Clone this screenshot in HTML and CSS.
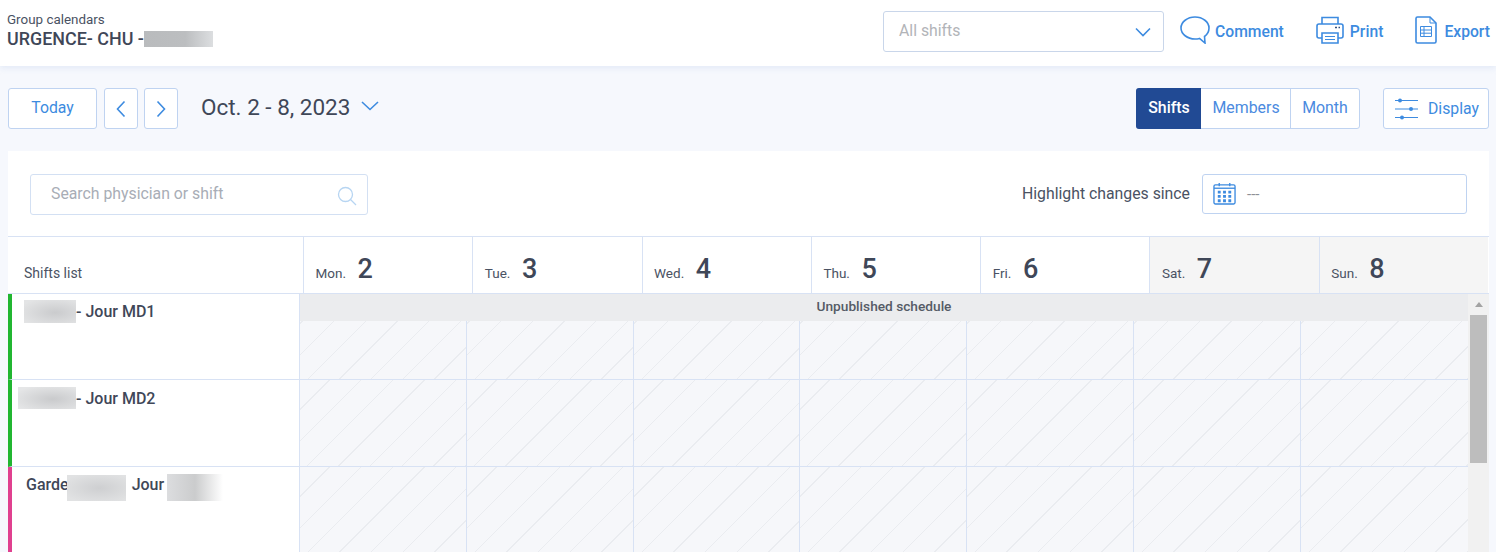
FILE: index.html
```html
<!DOCTYPE html>
<html lang="en">
<head>
<meta charset="utf-8">
<title>Group calendars</title>
<link rel="stylesheet" href="styles.css">
</head>
<body>
<header class="topbar">
  <div class="title">
    <div class="title-small">Group calendars</div>
    <div class="title-main">URGENCE- CHU -<span class="redact redact-title"></span></div>
  </div>
  <div class="actions">
    <div class="select"><span>All shifts</span>
      <svg class="chev-select" viewBox="0 0 16 10" width="16" height="10"><path d="M1 1.500l7 7 7-7" fill="none" stroke="#3d8be0" stroke-width="1.600"/></svg>
    </div>
    <a class="action action-comment">
      <svg viewBox="0 0 30 28" width="30" height="28"><path d="M15 1C7.300 1 1 6 1 12s6.300 11 14 11c1.600 0 3-.2 4.500-.6L25 27l-.5-6.500C27.300 18.500 29 15.500 29 12 29 6 22.700 1 15 1z" fill="none" stroke="#3d8be0" stroke-width="1.600"/></svg>
      <span>Comment</span></a>
    <a class="action action-print">
      <svg viewBox="0 0 28 28" width="28" height="28" fill="none" stroke="#3d8be0" stroke-width="1.600"><path d="M6 8V1.500h16V8"/><path d="M6 22H3a2 2 0 0 1-2-2V10a2 2 0 0 1 2-2h22a2 2 0 0 1 2 2v10a2 2 0 0 1-2 2h-3"/><path d="M6 17h16v10H6z"/><path d="M9 20.500h10M9 23.500h10" stroke-width="1"/><path d="M19 11.500h2M22.500 11.500h1.500" stroke="#30507f" stroke-width="1.600"/></svg>
      <span>Print</span></a>
    <a class="action action-export">
      <svg viewBox="0 0 22 28" width="22" height="28" fill="none" stroke="#3d8be0" stroke-width="1.600"><path d="M1 2.500A1.500 1.500 0 0 1 2.500 1H15l6 6v18.500a1.500 1.500 0 0 1-1.500 1.500h-17A1.500 1.500 0 0 1 1 25.500z"/><path d="M15 1v6h6" stroke-width="1"/><path d="M5.500 10.500h11v10h-11zM5.500 14h11M5.500 17.200h11M9 10.500v10" stroke-width="1"/></svg>
      <span>Export</span></a>
  </div>
</header>

<section class="toolbar">
  <div class="nav">
    <button class="btn btn-today">Today</button>
    <button class="btn btn-arrow btn-prev"><svg viewBox="0 0 10 18" width="10" height="18"><path d="M8.500 1.500L1.500 9l7 7.500" fill="none" stroke="#3d8be0" stroke-width="1.600"/></svg></button>
    <button class="btn btn-arrow btn-next"><svg viewBox="0 0 10 18" width="10" height="18"><path d="M1.500 1.500L8.500 9l-7 7.500" fill="none" stroke="#3d8be0" stroke-width="1.600"/></svg></button>
    <div class="range">Oct. 2 - 8, 2023</div>
    <svg class="chev-range" viewBox="0 0 18 10" width="18" height="10"><path d="M1 1l8 7.500L17 1" fill="none" stroke="#3d8be0" stroke-width="1.600"/></svg>
  </div>
  <div class="views">
    <div class="segment">
      <div class="seg seg-on">Shifts</div>
      <div class="seg seg-members">Members</div>
      <div class="seg seg-month">Month</div>
    </div>
    <button class="btn btn-display">
      <svg viewBox="0 0 24 22" width="24" height="22" fill="none" stroke="#3d8be0"><path d="M1 2.500h23M1 11h23M1 19.500h23" stroke-width="1.100"/><circle cx="6" cy="2.500" r="2" fill="#3d8be0" stroke="none"/><circle cx="17" cy="11" r="2" fill="#3d8be0" stroke="none"/><circle cx="8" cy="19.500" r="2" fill="#3d8be0" stroke="none"/></svg>
      <span>Display</span></button>
  </div>
</section>

<main class="card">
  <div class="filters">
    <div class="search"><span>Search physician or shift</span>
      <svg viewBox="0 0 20 20" width="20" height="20" fill="none" stroke="#b7d5f2" stroke-width="1.300"><circle cx="8.500" cy="8.500" r="7"/><path d="M13.500 13.500l5.500 5.500"/></svg>
    </div>
    <div class="highlight">
      <span class="highlight-label">Highlight changes since</span>
      <div class="date">
        <svg viewBox="0 0 24 24" width="23" height="23"><rect x="1" y="3" width="22" height="20" rx="1.500" fill="none" stroke="#3d8be0" stroke-width="1.400"/><path d="M1 6.500h22" stroke="#3d8be0" stroke-width="1.400"/><path d="M6.500 1v3.500M17.500 1v3.500" stroke="#3d8be0" stroke-width="1.400"/><path d="M5 9h3v3H5zM10.500 9h3v3h-3zM16 9h3v3h-3zM5 13.500h3v3H5zM10.500 13.500h3v3h-3zM16 13.500h3v3h-3zM5 18h3v3H5zM10.500 18h3v3h-3zM16 18h3v3h-3z" fill="#3d8be0"/></svg>
        <span>---</span>
      </div>
    </div>
  </div>

  <div class="days">
    <div class="list-head">Shifts list</div>
    <div class="day"><span class="d-name">Mon.</span><span class="d-num">2</span></div>
    <div class="day"><span class="d-name">Tue.</span><span class="d-num">3</span></div>
    <div class="day"><span class="d-name">Wed.</span><span class="d-num">4</span></div>
    <div class="day"><span class="d-name">Thu.</span><span class="d-num">5</span></div>
    <div class="day"><span class="d-name">Fri.</span><span class="d-num">6</span></div>
    <div class="day day-off"><span class="d-name">Sat.</span><span class="d-num">7</span></div>
    <div class="day day-off"><span class="d-name">Sun.</span><span class="d-num">8</span></div>
  </div>

  <div class="body">
    <div class="rows">
      <div class="labels">
        <div class="label label-green label-one"><span class="redact redact-a"></span><span>- Jour MD1</span></div>
        <div class="label label-green label-two"><span class="redact redact-b"></span><span>- Jour MD2</span></div>
        <div class="label label-pink label-three"><span>Garde</span><span class="redact redact-c"></span><span>Jour</span><span class="redact redact-d"></span></div>
      </div>
      <div class="grid">
        <div class="banner">Unpublished schedule</div>
        <div class="row row-first"><i></i><i></i><i></i><i></i><i></i><i></i><i></i></div>
        <div class="row row-second"><i></i><i></i><i></i><i></i><i></i><i></i><i></i></div>
        <div class="row row-third"><i></i><i></i><i></i><i></i><i></i><i></i><i></i></div>
      </div>
    </div>
    <div class="scrollbar">
      <div class="scroll-up"></div>
      <div class="scroll-thumb"></div>
    </div>
  </div>
</main>
</body>
</html>
```

FILE: styles.css
```css
* { box-sizing: border-box; }
html, body { margin: 0; height: 552px; overflow: hidden; }
body { background: #f6f8fd; font-family: Roboto, "Liberation Sans", sans-serif; color: #3f4758; }

.topbar { height: 66px; background: #fff; box-shadow: 0 2px 6px rgba(190,205,235,.35); display: flex; justify-content: space-between; padding: 0 6px 0 7px; position: relative; }
.title { padding-top: 13px; }
.title-small { font-size: 13.4px; line-height: 14px; color: #4a5263; }
.title-main { font-size: 17.9px; font-weight: 500; line-height: 20px; margin-top: 2px; display: flex; color: #3f4758; }
.redact { display: inline-block; }
.redact-title { width: 69px; height: 16px; margin-top: 2px; background: linear-gradient(90deg,#b9bbbd,#bcbec0 60%,#dcdee0); }

.actions { display: flex; align-items: flex-start; }
.select { width: 281px; height: 41px; margin-top: 11px; border: 1px solid #c9d6ea; border-radius: 3px; display: flex; align-items: center; justify-content: space-between; padding: 0 11px 0 15px; font-size: 15.8px; color: #b2b4b8; }
.select span { margin-bottom: 2px; }
.chev-select { margin-right: 1px; }
.action { display: flex; align-items: center; color: #3d8be0; font-size: 15.7px; font-weight: 500; height: 30px; margin-top: 16px; }
.action svg { margin-bottom: 3px; }
.action-comment { margin-left: 16px; gap: 5px; }
.action-print { margin-left: 32px; gap: 6px; }
.action-export { margin-left: 32px; gap: 7px; }

.toolbar { height: 85px; padding: 22px 7px 0 8px; display: flex; justify-content: space-between; align-items: flex-start; }
.nav, .views { display: flex; align-items: flex-start; }
.btn { font-family: inherit; background: #fff; border: 1px solid #bfd3f1; border-radius: 3px; color: #3d8be0; font-size: 15.8px; padding: 0; display: flex; align-items: center; justify-content: center; height: 41px; }
.btn-today { width: 89px; padding-bottom: 2px; }
.btn-arrow { width: 34px; }
.btn-prev { margin-left: 7px; }
.btn-next { margin-left: 6px; }
.range { font-size: 22.5px; line-height: 38px; margin-left: 23px; color: #3f4758; }
.chev-range { margin: 13px 0 0 11px; }

.segment { display: flex; height: 41px; border: 1px solid #bfd3f1; border-radius: 3px; background: #fff; font-size: 15.9px; color: #4b8ae0; }
.seg { display: flex; align-items: center; justify-content: center; padding-bottom: 2px; }
.seg-on { width: 65px; margin: -1px 0 -1px -1px; padding-left: 1px; background: #214a94; color: #fff; border-radius: 3px 0 0 3px; font-weight: 500; }
.seg-members { width: 90px; padding-left: 1px; border-right: 1px solid #bfd3f1; }
.seg-month { width: 68px; }
.btn-display { width: 106px; margin-left: 23px; gap: 10px; }
.btn-display svg { margin-left: 1px; }

.card { margin: 0 7px 0 8px; background: #fff; }
.filters { height: 86px; padding: 23px 22px 0; display: flex; justify-content: space-between; align-items: flex-start; border-bottom: 1px solid #d8e2f4; }
.search { width: 338px; height: 41px; border: 1px solid #d3e0f3; border-radius: 3px; display: flex; align-items: center; justify-content: space-between; padding: 0 10px 0 20px; font-size: 15.8px; color: #a8adb6; }
.search span { margin-bottom: 2px; }
.search svg { margin-top: 2px; }
.highlight { display: flex; align-items: flex-start; }
.highlight-label { font-size: 15.8px; line-height: 40px; color: #4a5263; }
.date { width: 265px; height: 40px; margin-left: 12px; border: 1px solid #bfd3f1; border-radius: 3px; display: flex; align-items: center; padding: 0 0 0 10px; gap: 11px; font-size: 15px; color: #8d9096; }
.date svg { margin-bottom: 1px; }

.days { display: grid; grid-template-columns: 295px repeat(7, 169.3px); height: 57px; border-bottom: 1px solid #d8e2f4; }
.list-head { font-size: 14px; padding: 28px 0 0 16px; line-height: 16px; color: #4a5263; }
.day { border-left: 1px solid #d8e2f4; padding: 12px 0 9px 11.5px; display: flex; align-items: flex-end; }
.day-off { background: #f5f5f5; }
.d-name { font-size: 13.5px; line-height: 16px; color: #4a5263; margin-bottom: 3px; }
.d-num { font-size: 27px; font-weight: 500; line-height: 30px; margin-left: 11.5px; color: #3f4758; }

.body { display: flex; height: 258px; overflow: hidden; }
.rows { display: flex; width: 1460px; }
.labels { width: 291px; flex: none; }
.label { border-left: 4px solid; display: flex; align-items: flex-start; font-size: 16px; font-weight: 500; color: #3f4758; border-bottom: 1px solid #d8e2f4; line-height: 18px; }
.label-green { border-left-color: #21b631; }
.label-pink { border-left-color: #e0408f; border-bottom: 0; }
.label-one { height: 86px; padding: 9px 0 0 12px; }
.label-two { height: 87px; padding: 10px 0 0 6px; }
.label-three { height: 86px; padding: 9px 0 0 14px; }
.redact-a { width: 52px; height: 23px; margin-top: -3px; background: radial-gradient(ellipse at 60% 55%,#cacbcd,#e3e4e5 85%); }
.redact-b { width: 58px; height: 22px; margin-top: -3px; background: radial-gradient(ellipse at 60% 55%,#c9cacc,#e5e6e7 85%); }
.redact-c { width: 59px; height: 26px; margin: -1px 6px 0 -2px; background: radial-gradient(ellipse at 55% 50%,#cecfd1,#e1e2e3 85%); }
.redact-d { width: 56px; height: 27px; margin-top: -2px; margin-left: 3px; background: linear-gradient(90deg,#dcdddf,#cbcccd 50%,#fff); }

.grid { flex: 1; border-left: 1px solid #d8e2f4; position: relative; }
.banner { position: absolute; left: 0; right: 0; top: 0; height: 27px; background: #ebecee; text-align: center; font-size: 13.7px; font-weight: 500; line-height: 25px; color: #555b66; }
.row { display: grid; grid-template-columns: repeat(6, 166.8px) 1fr; border-bottom: 1px solid #d8e2f4; }
.row-first { height: 86px; }
.row-second { height: 87px; }
.row-third { height: 86px; border-bottom: 0; }
.row i { display: block; border-right: 1px solid #d8e2f4; background-color: #f6f7fa; background-image: repeating-linear-gradient(135deg, transparent 0, transparent 20.4px, #eaecf0 20.4px, #eaecf0 21.4px, transparent 21.4px, transparent 22.4px); }
.row i:last-child { border-right: 0; }

.scrollbar { width: 21px; flex: none; background: #f1f1f1; padding: 0 2px; }
.scroll-up { width: 0; height: 0; margin: 8px auto 0; border: 4px solid transparent; border-top: 0; border-bottom: 5px solid #a3a3a3; }
.scroll-thumb { height: 148px; background: #bdbdbd; margin-top: 8px; }
```
